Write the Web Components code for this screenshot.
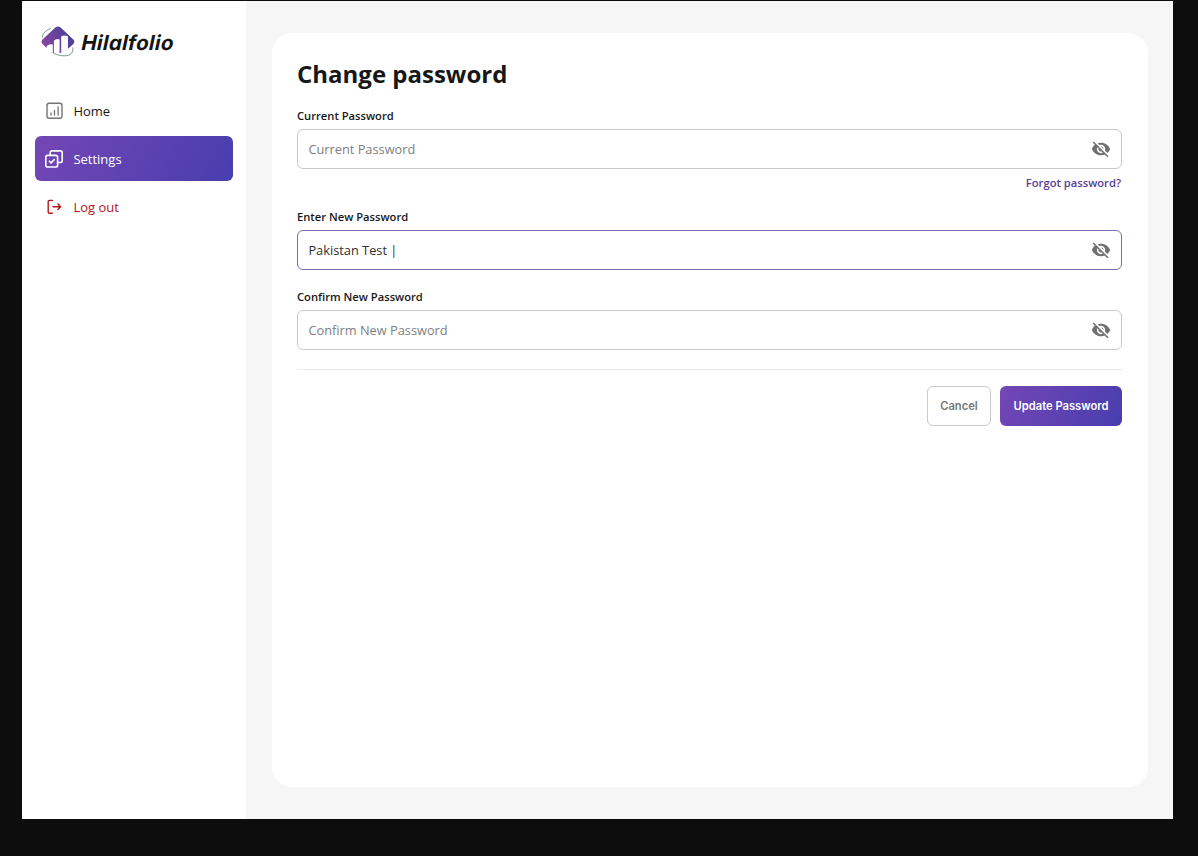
<!DOCTYPE html>
<html lang="en">
<head>
<meta charset="UTF-8">
<title>Hilalfolio</title>
<style>
  body {
    margin: 0;
    height: 856px;
    overflow: hidden;
    background: #0d0d0d;
    font-family: "Open Sans", "Noto Sans", sans-serif;
    color: #171717;
  }
</style>
</head>
<body>
<app-shell>
  <side-bar slot="sidebar">
    <brand-logo slot="brand"></brand-logo>
    <nav-item icon="chart">Home</nav-item>
    <nav-item icon="settings" active>Settings</nav-item>
    <nav-item icon="logout" danger>Log out</nav-item>
  </side-bar>
  <password-card heading="Change password">
    <password-field label="Current Password" placeholder="Current Password">
      <span slot="hint">Forgot password?</span>
    </password-field>
    <password-field label="Enter New Password" value="Pakistan Test |" focused></password-field>
    <password-field label="Confirm New Password" placeholder="Confirm New Password"></password-field>
    <action-button slot="actions">Cancel</action-button>
    <action-button slot="actions" primary>Update Password</action-button>
  </password-card>
</app-shell>

<script>
const ICONS = {
  chart: `
    <svg width="18" height="18" viewBox="0 0 18 18" fill="none" stroke="currentColor" stroke-linecap="round">
      <rect x="2" y="1.2" width="15" height="15" rx="2.2" stroke-width="1.4"/>
      <path d="M6.1 11v2M9.5 8.3v4.7M13.1 4.8v8.2" stroke-width="1.3"/>
    </svg>`,
  settings: `
    <svg width="18" height="18" viewBox="0 0 18 18" fill="none" stroke="currentColor" stroke-width="1.6" stroke-linecap="round" stroke-linejoin="round">
      <rect x=".8" y="5.4" width="11.8" height="11.6" rx="1.8"/>
      <path d="M5.2 5.2V2.6C5.2 1.6 5.9.9 6.9.9h8.5c1 0 1.8.7 1.8 1.7v8.2c0 1-.8 1.7-1.8 1.7h-2.4"/>
      <path d="M4.4 11.2l1.7 1.7 3.2-3.4"/>
    </svg>`,
  logout: `
    <svg width="18" height="18" viewBox="0 0 18 18" fill="none" stroke="currentColor" stroke-width="1.4" stroke-linecap="round" stroke-linejoin="round">
      <path d="M7.4 2.4H4.4c-.7 0-1.2.5-1.2 1.2V14c0 .7.5 1.2 1.2 1.2h3"/>
      <path d="M8 8.8h7.4M12.9 6.1l2.7 2.7-2.7 2.7"/>
    </svg>`,
  eyeOff: `
    <svg width="20" height="20" viewBox="0 0 24 24" fill="currentColor">
      <path d="M12 7c2.76 0 5 2.24 5 5 0 .65-.13 1.26-.36 1.83l2.92 2.92c1.51-1.26 2.7-2.89 3.43-4.75-1.73-4.39-6-7.5-11-7.5-1.4 0-2.74.25-3.98.7l2.16 2.16C10.74 7.13 11.35 7 12 7zM2 4.27l2.28 2.28.46.46C3.08 8.3 1.78 10.02 1 12c1.73 4.39 6 7.5 11 7.5 1.55 0 3.03-.3 4.38-.84l.42.42L19.73 22 21 20.73 3.27 3 2 4.27zM7.53 9.8l1.55 1.55c-.05.21-.08.43-.08.65 0 1.66 1.34 3 3 3 .22 0 .44-.03.65-.08l1.55 1.55c-.67.33-1.41.53-2.2.53-2.76 0-5-2.24-5-5 0-.79.2-1.53.53-2.2zm4.31-.78l3.15 3.15.02-.16c0-1.66-1.34-3-3-3l-.17.01z"/>
    </svg>`
};

class AppShell extends HTMLElement {
  constructor() {
    super();
    this.attachShadow({ mode: "open" });
  }

  connectedCallback() {
    this.shadowRoot.innerHTML = `
      <style>
        :host {
          display: flex;
          width: 1150.6px;
          height: 818px;
          margin: 1px 0 0 22.4px;
          background: #f6f6f6;
        }
        main {
          flex: 1;
          display: flex;
          padding: 32px 25px 32px 25.6px;
        }
      </style>
      <slot name="sidebar"></slot>
      <main><slot></slot></main>
    `;
  }
}

class SideBar extends HTMLElement {
  constructor() {
    super();
    this.attachShadow({ mode: "open" });
  }

  connectedCallback() {
    this.shadowRoot.innerHTML = `
      <style>
        :host {
          display: block;
          box-sizing: border-box;
          width: 224px;
          padding: 24px 13px;
          background: #fff;
        }
        nav {
          display: flex;
          flex-direction: column;
          gap: 3px;
          margin-top: 30px;
        }
      </style>
      <slot name="brand"></slot>
      <nav><slot></slot></nav>
    `;
  }
}

class BrandLogo extends HTMLElement {
  constructor() {
    super();
    this.attachShadow({ mode: "open" });
  }

  connectedCallback() {
    this.shadowRoot.innerHTML = `
      <style>
        :host {
          display: flex;
          align-items: center;
          gap: 6px;
          height: 33px;
          padding-left: 6px;
        }
        /* upright face slanted by hand, so the f keeps no descender */
        span {
          font: 700 20.5px/33px Inter, sans-serif;
          font-feature-settings: "cv11";
          letter-spacing: 0.35px;
          color: #141414;
          padding-top: 2px;
          transform: skewX(-12deg);
        }
      </style>
      <svg width="35" height="33" viewBox="0 0 35 33" fill="none">
        <defs>
          <linearGradient id="g" x1="4" y1="22" x2="29" y2="8" gradientUnits="userSpaceOnUse">
            <stop stop-color="#85479f"/>
            <stop offset="1" stop-color="#4b4099"/>
          </linearGradient>
        </defs>
        <path d="M14.4 2.6Q17 .6 19.6 2.6L32.3 14.5Q34.3 16.8 32.3 19L22.5 28H11L1.5 19Q-.5 16.8 1.5 14.5Z" fill="url(#g)"/>
        <path d="M5.6 21.2q2.8-3 6.2-1.6v8.6q-3.7-1.2-6.2-4.2ZM12.9 15.8q2.7-2.8 5.7-1.4v15.5q-3.2-.1-5.7-1ZM20.2 11.6q3.3-2.3 6.8 0V25.8q-2.7 2.9-6.8 3.8Z" fill="#fff"/>
        <path d="M9.3 3.6C5 4.8 1.5 8.6 1.4 12.1M12 27.8c5.2 3.2 12.6 4 16.9 1.8 2.6-1.4 3.4-4 2.8-6.8" stroke="#699184" stroke-width=".9" stroke-linecap="round"/>
      </svg>
      <span>Hilalfolio</span>
    `;
  }
}

class NavItem extends HTMLElement {
  constructor() {
    super();
    this.attachShadow({ mode: "open" });
  }

  connectedCallback() {
    this.shadowRoot.innerHTML = `
      <style>
        :host {
          display: flex;
          align-items: center;
          gap: 10px;
          box-sizing: border-box;
          height: 45px;
          padding: 0 10px;
          border-radius: 6px;
          font-size: 13px;
          font-weight: 500;
        }
        svg { display: block; color: #747474; }
        :host([active]) {
          background: linear-gradient(118deg, #7446b5 0%, #483eae 100%);
          color: #fff;
        }
        :host([danger]) { color: #b3151c; }
        :host([active]) svg, :host([danger]) svg { color: inherit; }
      </style>
      ${ICONS[this.getAttribute("icon")]}
      <slot></slot>
    `;
  }
}

class PasswordCard extends HTMLElement {
  constructor() {
    super();
    this.attachShadow({ mode: "open" });
  }

  connectedCallback() {
    this.shadowRoot.innerHTML = `
      <style>
        :host {
          display: block;
          flex: 1;
          box-sizing: border-box;
          padding: 23px 26px 24px 25px;
          border-radius: 20px;
          background: #fff;
        }
        h1 {
          margin: 0 0 17px;
          font-size: 24px;
          font-weight: 700;
          line-height: 35px;
        }
        .fields {
          display: flex;
          flex-direction: column;
          gap: 19px;
          padding-bottom: 19px;
          border-bottom: 1px solid #ebebeb;
        }
        .actions {
          display: flex;
          justify-content: flex-end;
          gap: 9px;
          margin-top: 16px;
        }
      </style>
      <h1>${this.getAttribute("heading")}</h1>
      <div class="fields"><slot></slot></div>
      <div class="actions"><slot name="actions"></slot></div>
    `;
  }
}

class PasswordField extends HTMLElement {
  constructor() {
    super();
    this.attachShadow({ mode: "open" });
  }

  connectedCallback() {
    const value = this.getAttribute("value");
    this.shadowRoot.innerHTML = `
      <style>
        :host { display: block; }
        .label {
          font-size: 11.2px;
          font-weight: 600;
          line-height: 16px;
          margin-bottom: 5px;
        }
        .box {
          display: flex;
          align-items: center;
          justify-content: space-between;
          box-sizing: border-box;
          height: 40px;
          padding: 0 10px 0 10.4px;
          border: 1px solid #c9c9ca;
          border-radius: 6px;
          font-size: 12.8px;
          color: #808080;
        }
        .box.filled { color: #303030; }
        :host([focused]) .box { border-color: #7e6caf; }
        svg { display: block; color: #707070; }
        ::slotted([slot="hint"]) {
          display: block;
          margin: 6px 1px 0 0;
          text-align: right;
          font-size: 11.2px;
          font-weight: 600;
          line-height: 15.4px;
          color: #5a3d94;
        }
      </style>
      <div class="label">${this.getAttribute("label")}</div>
      <div class="box ${value ? "filled" : ""}">
        <span>${value || this.getAttribute("placeholder")}</span>
        ${ICONS.eyeOff}
      </div>
      <slot name="hint"></slot>
    `;
  }
}

class ActionButton extends HTMLElement {
  constructor() {
    super();
    this.attachShadow({ mode: "open" });
  }

  connectedCallback() {
    this.shadowRoot.innerHTML = `
      <style>
        :host {
          display: flex;
          align-items: center;
          justify-content: center;
          box-sizing: border-box;
          width: 64px;
          height: 40px;
          border: 1px solid #c9c9ca;
          border-radius: 6px;
          font: 600 11.2px Inter, sans-serif;
          color: #777;
        }
        :host([primary]) {
          width: 122px;
          border: 0;
          background: linear-gradient(118deg, #7446b5 0%, #483eae 100%);
          color: #fff;
        }
      </style>
      <slot></slot>
    `;
  }
}

customElements.define("app-shell", AppShell);
customElements.define("side-bar", SideBar);
customElements.define("brand-logo", BrandLogo);
customElements.define("nav-item", NavItem);
customElements.define("password-card", PasswordCard);
customElements.define("password-field", PasswordField);
customElements.define("action-button", ActionButton);
</script>
</body>
</html>
